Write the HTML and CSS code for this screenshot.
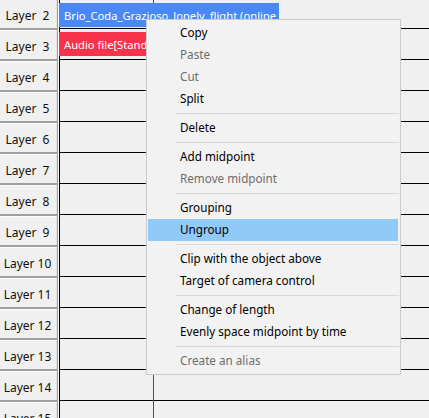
FILE: index.html
```html
<!DOCTYPE html>
<html>
<head>
<meta charset="utf-8">
<link rel="stylesheet" href="styles.css">
</head>
<body>
<div class="timeline">
  <div class="layers">
    <div class="layer-btn">Layer  2</div>
    <div class="layer-btn">Layer  3</div>
    <div class="layer-btn">Layer  4</div>
    <div class="layer-btn">Layer  5</div>
    <div class="layer-btn">Layer  6</div>
    <div class="layer-btn">Layer  7</div>
    <div class="layer-btn">Layer  8</div>
    <div class="layer-btn">Layer  9</div>
    <div class="layer-btn">Layer 10</div>
    <div class="layer-btn">Layer 11</div>
    <div class="layer-btn">Layer 12</div>
    <div class="layer-btn">Layer 13</div>
    <div class="layer-btn">Layer 14</div>
    <div class="layer-btn">Layer 15</div>
  </div>
  <div class="tracks">
    <div class="cursor"></div>
    <div class="track"><div class="clip clip-blue">Brio_Coda_Grazioso_lonely_flight (online music)</div></div>
    <div class="track"><div class="clip clip-red">Audio file[Standard playback]</div></div>
    <div class="track"></div>
    <div class="track"></div>
    <div class="track"></div>
    <div class="track"></div>
    <div class="track"></div>
    <div class="track"></div>
    <div class="track"></div>
    <div class="track"></div>
    <div class="track"></div>
    <div class="track"></div>
    <div class="track"></div>
    <div class="track"></div>
  </div>
</div>

<div class="menu">
  <div class="item">Copy</div>
  <div class="item disabled">Paste</div>
  <div class="item disabled">Cut</div>
  <div class="item">Split</div>
  <div class="sep"></div>
  <div class="item">Delete</div>
  <div class="sep"></div>
  <div class="item">Add midpoint</div>
  <div class="item disabled">Remove midpoint</div>
  <div class="sep"></div>
  <div class="item">Grouping</div>
  <div class="item active">Ungroup</div>
  <div class="sep"></div>
  <div class="item">Clip with the object above</div>
  <div class="item">Target of camera control</div>
  <div class="sep"></div>
  <div class="item">Change of length</div>
  <div class="item">Evenly space midpoint by time</div>
  <div class="sep"></div>
  <div class="item disabled">Create an alias</div>
</div>
</body>
</html>
```
FILE: styles.css
```css
html, body {
  margin: 0;
  padding: 0;
  background: #f0f0f0;
  overflow: hidden;
  height: 418px;
  font-family: "Noto Sans", "Liberation Sans", sans-serif;
  font-size: 11.7px;
  color: #000;
}

.timeline {
  display: flex;
  height: 418px;
  overflow: hidden;
}

.layers {
  display: flex;
  flex-direction: column;
  width: 58px;
  margin-top: -2px;
  border-right: 1px solid #fafafa;
  flex: none;
}

.layer-btn {
  box-sizing: border-box;
  height: 31px;
  width: 58px;
  flex: none;
  border: 1px solid #a0a0a0;
  border-left: none;
  box-shadow: inset 0 1px 0 #fcfcfc, inset -1px 0 0 #e3e3e3;
  background: #f0f0f0;
  display: flex;
  align-items: center;
  justify-content: center;
  white-space: pre;
  color: #111;
  padding-top: 3px;
  padding-right: 2px;
  font-size: 12px;
}

.tracks {
  position: relative;
  flex: 1;
  display: flex;
  flex-direction: column;
  margin-top: -3px;
}

.cursor {
  position: absolute;
  left: 94px;
  top: 0;
  bottom: 0;
  width: 1px;
  background: #c81e1e;
  z-index: 1;
}

.track {
  box-sizing: border-box;
  height: 31px;
  flex: none;
  border-top: 1px solid #000;
  border-left: 1px solid #000;
  display: flex;
  align-items: flex-start;
}

.clip {
  position: relative;
  z-index: 2;
  box-sizing: border-box;
  height: 24px;
  margin-left: -1px;
  padding-left: 5px;
  padding-top: 1px;
  color: #fff;
  white-space: nowrap;
  overflow: hidden;
  line-height: 23px;
  font-size: 11.2px;
}

.clip-blue {
  width: 220px;
  margin-top: 5px;
  background: #4a87f7;
}

.clip-red {
  width: 160px;
  margin-top: 3px;
  background: #f7334b;
}

.menu {
  position: absolute;
  left: 146px;
  top: 19px;
  width: 255px;
  box-sizing: border-box;
  background: #f2f2f2;
  border: 1px solid #cccccc;
  padding: 2px 0;
  z-index: 10;
}

.item {
  height: 22px;
  line-height: 21px;
  padding-left: 33px;
  white-space: nowrap;
  color: #000;
}

.item.disabled {
  color: #6d6d6d;
}

.item.active {
  background: #91c9f7;
  margin: 0 2px 0 1px;
  padding-left: 32px;
}

.sep {
  height: 1px;
  background: #d7d7d7;
  margin: 3px 1px 3px 29px;
}
```
